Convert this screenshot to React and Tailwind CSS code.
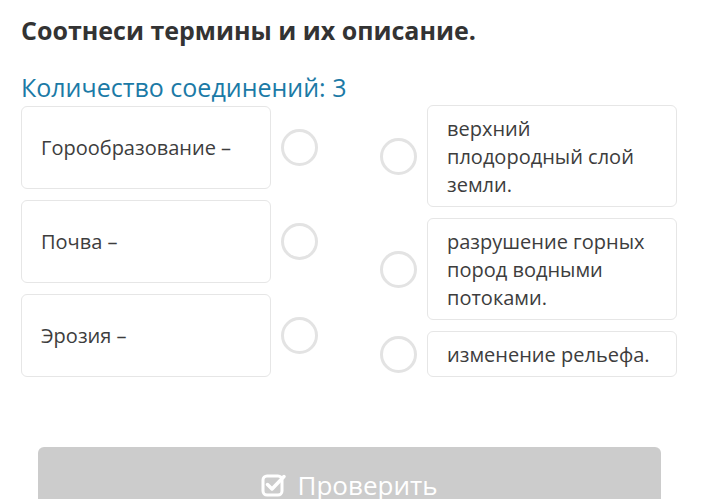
import React from "react";

const terms = ["Горообразование –", "Почва –", "Эрозия –"];
const descriptions = [
  "верхний плодородный слой земли.",
  "разрушение горных пород водными потоками.",
  "изменение рельефа.",
];

const Dot = () => (
  <div className="w-[37px] h-[37px] shrink-0 rounded-full border-[3px] border-[#e3e3e3] bg-white" />
);

const App = () => {
  return (
    <div
      className="min-h-[499px] bg-white pl-[21px] pr-[31px] pt-[14px] overflow-hidden"
      style={{ fontFamily: '"Open Sans", "Liberation Sans", sans-serif' }}
    >
      <h1 className="text-[25px] leading-[32px] font-bold text-[#333333]">
        Соотнеси термины и их описание.
      </h1>
      <div className="mt-[25px] text-[25px] leading-[32px] text-[#1b7aa6]">
        Количество соединений: 3
      </div>

      <div className="mt-[2px] flex">
        {/* left side */}
        <div className="flex flex-col gap-[11px] pt-px">
          {terms.map((t) => (
            <div key={t} className="flex items-center gap-[10px]">
              <div className="w-[250px] h-[83px] flex items-center px-[19px] rounded-md border border-[#e6e6e6] text-[20px] leading-[28px] text-[#3d3d3d]">
                {t}
              </div>
              <Dot />
            </div>
          ))}
        </div>

        {/* right side */}
        <div className="ml-[62px] flex flex-col gap-[11px]">
          {descriptions.map((d) => (
            <div key={d} className="flex items-center gap-[10px]">
              <Dot />
              <div className="w-[250px] pl-[19px] pr-[12px] pt-[9px] pb-[7px] rounded-md border border-[#e6e6e6] text-[20px] leading-[28px] text-[#3d3d3d]">
                {d}
              </div>
            </div>
          ))}
        </div>
      </div>

      <div className="mt-[70px] mx-[17px]">
        <button className="w-full h-[76px] rounded-md bg-[#cccccc] flex items-center justify-center gap-[10px] text-white text-[26px]">
          <svg width="26" height="24" viewBox="0 0 26 24" fill="none">
            <rect x="2" y="3" width="19" height="19" rx="4" stroke="white" strokeWidth="3" />
            <path d="M6.5 11.5 L11 16 L23 3.5" stroke="white" strokeWidth="3.5" strokeLinecap="round" strokeLinejoin="round" />
          </svg>
          <span>Проверить</span>
        </button>
      </div>
    </div>
  );
};

export default App;
